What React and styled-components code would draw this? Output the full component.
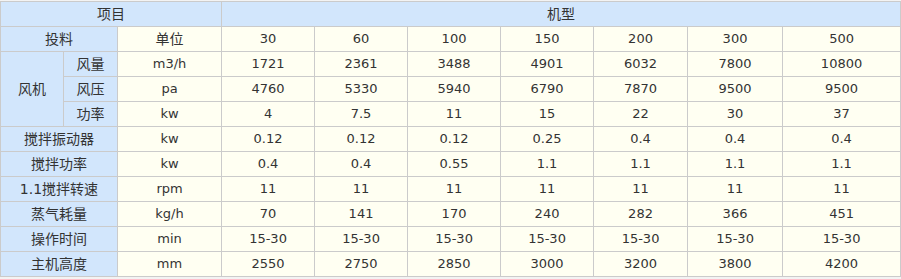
import React from "react";
import styled, { createGlobalStyle } from "styled-components";

const GlobalStyle = createGlobalStyle`
  html, body {
    margin: 0;
    padding: 0;
    background: #f3f3f3;
  }
`;

const models = ["30", "60", "100", "150", "200", "300", "500"];

const fanRows = [
  { name: "风量", unit: "m3/h", values: ["1721", "2361", "3488", "4901", "6032", "7800", "10800"] },
  { name: "风压", unit: "pa", values: ["4760", "5330", "5940", "6790", "7870", "9500", "9500"] },
  { name: "功率", unit: "kw", values: ["4", "7.5", "11", "15", "22", "30", "37"] },
];

const rows = [
  { name: "搅拌振动器", unit: "kw", values: ["0.12", "0.12", "0.12", "0.25", "0.4", "0.4", "0.4"] },
  { name: "搅拌功率", unit: "kw", values: ["0.4", "0.4", "0.55", "1.1", "1.1", "1.1", "1.1"] },
  { name: "1.1搅拌转速", unit: "rpm", values: ["11", "11", "11", "11", "11", "11", "11"] },
  { name: "蒸气耗量", unit: "kg/h", values: ["70", "141", "170", "240", "282", "366", "451"] },
  { name: "操作时间", unit: "min", values: ["15-30", "15-30", "15-30", "15-30", "15-30", "15-30", "15-30"] },
  { name: "主机高度", unit: "mm", values: ["2550", "2750", "2850", "3000", "3200", "3800", "4200"] },
];

const colWidths = [63, 54, 104, 93, 93, 93, 93, 94, 95, 118];

export default function App() {
  return (
    <Page>
      <GlobalStyle />
      <SpecTable>
        <colgroup>
          {colWidths.map((w, i) => (
            <col key={i} style={{ width: w }} />
          ))}
        </colgroup>
        <tbody>
          <Row>
            <Cell head colSpan={3}>项目</Cell>
            <Cell head colSpan={7}>机型</Cell>
          </Row>
          <Row>
            <Cell head colSpan={2}>投料</Cell>
            <Cell zh>单位</Cell>
            {models.map((m) => (
              <Cell key={m}>{m}</Cell>
            ))}
          </Row>
          {fanRows.map((r, i) => (
            <Row key={r.name}>
              {i === 0 && (
                <Cell head rowSpan={3}>
                  风机
                </Cell>
              )}
              <Cell head>{r.name}</Cell>
              <Cell>{r.unit}</Cell>
              {r.values.map((v, j) => (
                <Cell key={j}>{v}</Cell>
              ))}
            </Row>
          ))}
          {rows.map((r) => (
            <Row key={r.name}>
              <Cell head colSpan={2}>{r.name}</Cell>
              <Cell>{r.unit}</Cell>
              {r.values.map((v, j) => (
                <Cell key={j}>{v}</Cell>
              ))}
            </Row>
          ))}
        </tbody>
      </SpecTable>
    </Page>
  );
}

const Page = styled.div`
  width: 901px;
  height: 279px;
  padding-top: 1px;
  box-sizing: border-box;
`;

const SpecTable = styled.table`
  width: 900px;
  table-layout: fixed;
  border-collapse: collapse;
  font-family: "DejaVu Sans", "Noto Sans CJK SC", sans-serif;
  font-size: 13px;
  line-height: 16px;
  color: #333;
`;

const Row = styled.tr`
  height: 25px;
`;

const Cell = styled.td`
  padding: 0 0 1px;
  text-align: center;
  vertical-align: middle;
  border: 1px solid #cbcbcb;
  background: ${({ head }) => (head ? "#d2e6fc" : "#fffff2")};
  font-size: ${({ head, zh }) => (head || zh ? "14px" : "13px")};
  white-space: nowrap;
`;
